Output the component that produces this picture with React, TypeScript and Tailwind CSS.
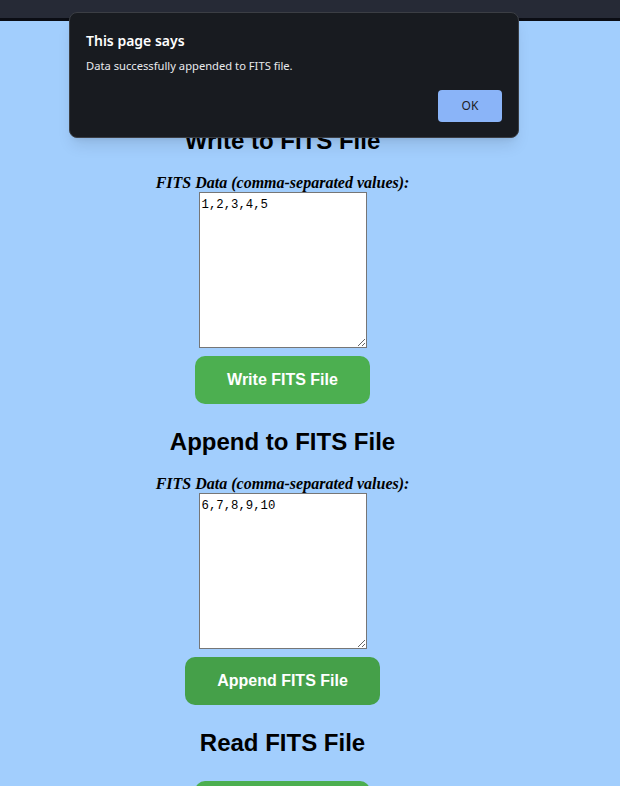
import React from "react"

const sans = "font-['Liberation_Sans',Arial,sans-serif]"

const FitsForm = ({ title, value, button, hover }: { title: string; value: string; button: string; hover?: boolean }) => (
  <div className="flex flex-col items-center">
    <h2 className={`${sans} text-[24px] font-bold leading-[28px] text-black`}>{title}</h2>
    <label className="mt-[18px] font-['Liberation_Serif','Times_New_Roman',serif] text-[16px] font-bold italic leading-[19px] text-black">
      FITS Data (comma-separated values):
    </label>
    <textarea
      defaultValue={value}
      className="block h-[156px] w-[168px] border border-[#767676] bg-white px-[2px] pt-[3px] font-['Liberation_Mono',monospace] text-[12.3px] leading-[18px] text-black outline-none"
    />
    <button
      className={`${sans} mt-2 rounded-[10px] px-8 py-[15px] text-[16px] font-bold leading-[18px] text-white ${
        hover ? "bg-[#45a049]" : "bg-[#4caf50]"
      }`}
    >
      {button}
    </button>
  </div>
)

export default function App() {
  return (
    <div className="relative h-[786px] w-[620px] overflow-hidden bg-[#a2cefd]">
      <div className="h-[18px] bg-[#262a36]" />
      <div className="h-[3px] bg-[#0b0d14]" />

      <main className="flex w-[565px] flex-col items-center pt-[106px]">
        <FitsForm title="Write to FITS File" value="1,2,3,4,5" button="Write FITS File" />
        <div className="mt-[24px]">
          <FitsForm title="Append to FITS File" value="6,7,8,9,10" button="Append FITS File" hover />
        </div>
        <h2 className={`${sans} mt-[24px] text-[24px] font-bold leading-[28px] text-black`}>Read FITS File</h2>
        <button className={`${sans} mt-[24px] rounded-[10px] bg-[#4caf50] px-8 py-[15px] text-[16px] font-bold leading-[18px] text-white`}>
          Read FITS File
        </button>
      </main>

      {/* alert dialog */}
      <div className="absolute left-[69px] top-[12px] flex h-[126px] w-[450px] flex-col rounded-[8px] border border-[#3b3e44] bg-[#181b20] px-4 pt-[18px] font-['Noto_Sans',sans-serif] shadow-lg">
        <div className="text-[14px] font-semibold leading-[20px] text-white">This page says</div>
        <div className="mt-[7px] text-[11.2px] leading-[16px] text-[#e8eaed]">Data successfully appended to FITS file.</div>
        <div className="mt-auto mb-[15px] flex justify-end">
          <button className="h-[32px] w-[64px] rounded-[4px] bg-[#8ab4f8] text-[12px] text-[#202124]">OK</button>
        </div>
      </div>
    </div>
  )
}
